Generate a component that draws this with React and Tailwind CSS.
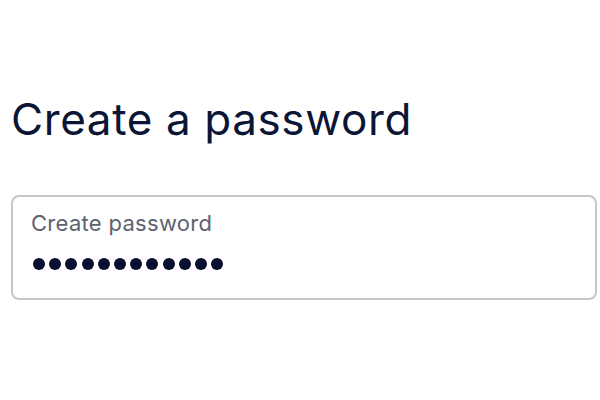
import React from 'react';

const DOTS = 12;

export default function App() {
  return (
    <div className="w-[600px] h-[400px] bg-white font-['Inter',sans-serif] overflow-hidden">
      <div className="pt-[93px] pl-[11px]">
        <h1 className="text-[44px] leading-[52px] font-normal text-[#0b1535] tracking-[0.6px]">
          Create a password
        </h1>

        <div className="mt-[50px] w-[586px] h-[105px] rounded-lg border-2 border-[#c6c7c9] pt-[13px] pl-[18px]">
          <label className="block text-[22px] leading-[26px] text-[#5d6370] tracking-[0.3px]">Create password</label>
          <div className="mt-[22px] flex gap-[4.2px] ml-[2px]" aria-label="password">
            {Array.from({ length: DOTS }).map((_, i) => (
              <span key={i} className="w-3 h-3 rounded-full bg-[#070f2e]" />
            ))}
          </div>
        </div>
      </div>
    </div>
  );
}
